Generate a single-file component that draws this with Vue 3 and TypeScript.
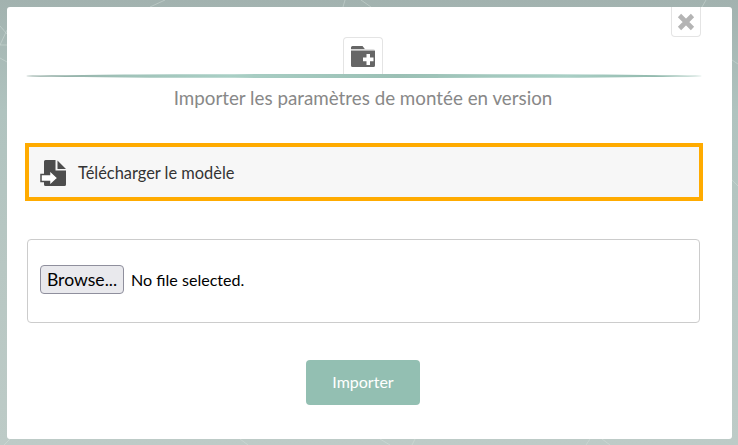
<script setup lang="ts">
const title: string = 'Importer les paramètres de montée en version'
</script>

<template>
  <div class="page">
    <svg class="map" width="738" height="445" viewBox="0 0 738 445" fill="none" stroke="#dbe5e2" stroke-opacity=".4">
      <path d="M0 45L7 30M0 26L7 34M0 45H7M0 58L7 62M345 0L343 7M361 0L371 7M702 7L706 0M732 60L738 64M732 180L738 186M10 439L4 445M240 439L248 445M415 439L412 445M380 439L390 445M590 439L586 445M602 439L610 445M150 7L165 0" />
    </svg>
    <main class="modal">
      <div class="top-row">
        <button class="close" type="button" aria-label="Fermer">
          <svg width="18" height="18" viewBox="0 0 18 18"><path d="M2.500 2.500L15.500 15.500M15.500 2.500L2.500 15.500" stroke="#b4b4b4" stroke-width="4.600" /></svg>
        </button>
      </div>
      <header class="head">
        <div class="tile">
          <svg width="24" height="21" viewBox="0 0 24 20" preserveAspectRatio="none">
            <path fill="#666" d="M1.500 0h10l2.500 3h8.500A1.500 1.500 0 0 1 24 4.500v14a1.500 1.500 0 0 1-1.500 1.500h-21A1.500 1.500 0 0 1 0 18.500v-17A1.500 1.500 0 0 1 1.500 0z" />
            <path fill="#fff" d="M0 3.200h24v1H0zM15.500 7.500h3.500v3.500h3.500v3.500H19v3.500h-3.500v-3.500H12v-3.500h3.500z" />
          </svg>
        </div>
        <div class="rule"></div>
        <h1 class="title">{{ title }}</h1>
      </header>
      <a class="download">
        <svg class="doc" width="26" height="26" viewBox="0 0 26 26">
          <path fill="#4d4d4d" d="M5.500 0H15.500v10.500H26v14a1.500 1.500 0 0 1-1.500 1.500H5.500A1.500 1.500 0 0 1 4 24.500v-23A1.500 1.500 0 0 1 5.500 0zM17.500 0.500L26 9h-8.500z" />
          <path fill="#fff" stroke="#4d4d4d" stroke-width="1.500" d="M1 14.500h8.500V10.200L17.800 18l-8.300 7.800v-4.300H1z" />
        </svg>
        <span>Télécharger le modèle</span>
      </a>
      <div class="file-box">
        <button class="browse" type="button">Browse...</button>
        <span class="file-name">No file selected.</span>
      </div>
      <div class="actions">
        <button class="import" type="button">Importer</button>
      </div>
    </main>
  </div>
</template>

<style>
html, body { margin: 0; padding: 0; }
</style>

<style scoped>
.page {
  position: relative;
  box-sizing: border-box;
  width: 738px;
  height: 445px;
  padding: 7px 6px 6px 7px;
  overflow: hidden;
  background: linear-gradient(180deg, #a2b2af 0%, #b0c3bf 25%, #b8c7c3 60%, #bdcbc7 100%);
  font-family: Lato, "Open Sans", sans-serif;
}
.map { position: absolute; left: 0; top: 0; }
.modal {
  position: relative;
  box-sizing: border-box;
  height: 432px;
  padding: 0 31px 0 18px;
  background: #fff;
  border-radius: 3px;
  display: flex;
  flex-direction: column;
}
.top-row { display: flex; justify-content: flex-end; height: 30px; }
.close {
  box-sizing: border-box;
  width: 30px;
  height: 30px;
  padding: 0;
  display: flex;
  align-items: center;
  justify-content: center;
  background: #fff;
  border: 1px solid #e4e4e4;
  border-top: 0;
  border-radius: 0 0 4px 4px;
}
.head { display: flex; flex-direction: column; align-items: center; }
.tile {
  box-sizing: border-box;
  width: 40px;
  height: 39px;
  padding-bottom: 1px;
  display: flex;
  align-items: center;
  justify-content: center;
  border: 1px solid #e4e4e4;
  border-bottom: 0;
  border-radius: 4px 4px 0 0;
}
.rule {
  width: 676px;
  height: 4px;
  margin: -2px 0 0 2px;
  border-radius: 50%;
  background: linear-gradient(90deg, #8fa8a0 0%, #a0c3b9 15%, #a9cfc5 30%, #9bc0b5 55%, #a9cfc5 80%, #93baae 93%, #c4dbd4 100%);
}
.title {
  margin: 10px 0 0;
  font-size: 18.8px;
  line-height: 20px;
  font-weight: 400;
  color: #888;
  white-space: nowrap;
}
.download {
  box-sizing: border-box;
  width: 678px;
  height: 58px;
  margin-top: 35px;
  padding-left: 11px;
  display: flex;
  align-items: center;
  gap: 12px;
  background: #f7f7f7;
  border: 4px solid #ffab00;
  font-size: 16.4px;
  color: #333;
}
.doc { flex: none; margin-top: 1px; }
.file-box {
  box-sizing: border-box;
  width: 673px;
  height: 84px;
  margin: 38px 0 0 2px;
  padding: 0 12px 3px;
  display: flex;
  align-items: center;
  gap: 7px;
  border: 1px solid #ccc;
  border-radius: 4px;
}
.browse {
  box-sizing: border-box;
  width: 84px;
  height: 29px;
  padding: 0;
  background: #e9e9ed;
  border: 1px solid #8f8f9d;
  border-radius: 4px;
  font: 400 17.6px Lato, sans-serif;
  color: #000;
}
.file-name { font-size: 16.1px; color: #000; }
.actions { display: flex; justify-content: center; margin-top: 37px; }
.import {
  width: 114px;
  height: 45px;
  padding: 0 0 2px;
  background: #93bfb2;
  border: 0;
  border-radius: 4px;
  font: 400 16px Lato, sans-serif;
  color: #fff;
}
</style>
